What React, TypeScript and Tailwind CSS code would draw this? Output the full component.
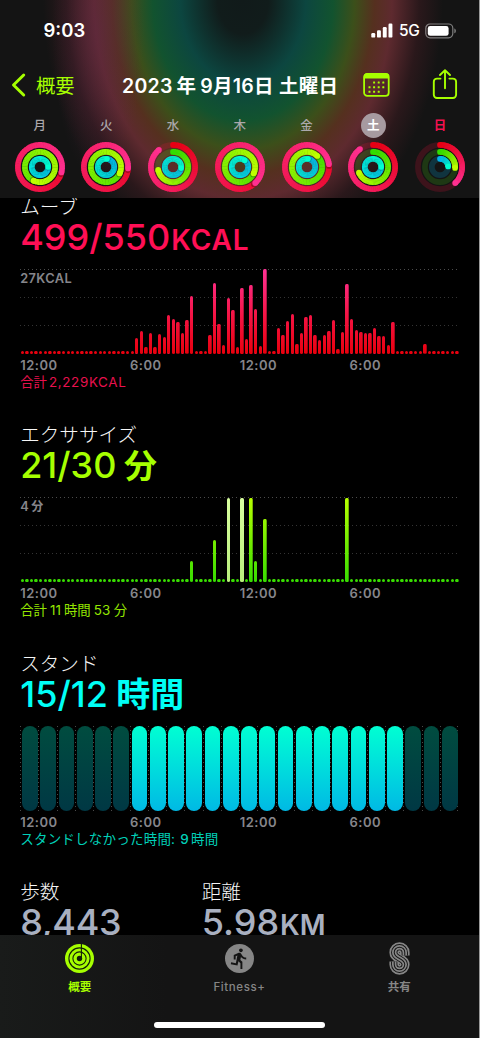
import React from 'react';
import { MdDirectionsRun } from 'react-icons/md';

type Day = { label: string; rings: number[]; state?: 'selected' | 'today' };

const days: Day[] = [
  { label: '月', rings: [1.29, 1.57, 1.25] },
  { label: '火', rings: [1.26, 1.32, 1.02] },
  { label: '水', rings: [0.89, 0.72, 1.27] },
  { label: '木', rings: [1.38, 1.32, 1.1] },
  { label: '金', rings: [1.23, 1.12, 1.02] },
  { label: '土', rings: [0.9, 0.69, 1.25], state: 'selected' },
  { label: '日', rings: [0.38, 0.26, 0.24], state: 'today' },
];

// one value per 15 minutes, in px
const moveBars: number[] = [
  ...Array(25).fill(3),
  15.7, 23, 6.7, 20.7, 7, 19.7, 17.3, 38.7, 35.3, 31.7, 20.7, 33.7, 58, 3, 3, 3,
  19.3, 71, 30.3, 9.3, 56, 43.7, 7.3, 66.3, 14.7, 69.3, 44.7, 8, 84.7, 3, 3,
  25.7, 19, 33.3, 39.7, 10.3, 21.3, 36.7, 39, 19.3, 14, 18.7, 23.3, 33.7, 4.7,
  22, 69.7, 34.7, 24.3, 21.7, 20.7, 20.7, 25.7, 18, 18, 9, 32.3,
  3, 3, 3, 3, 3, 3, 9.7, 3, 3, 3, 3, 3, 3, 3,
];

const exerciseValues: Record<number, number> = {
  37: 21.3, 42: 42.3, 45: 84.3, 48: 84.3, 50: 84.3, 51: 21.3, 53: 63.3, 71: 84.3,
};
const exerciseBars = Array.from({ length: 96 }, (_, i) => exerciseValues[i] ?? 3);

const ringColors = [
  { from: [230, 0, 20], to: [255, 48, 145], track: 'rgba(250,17,60,0.18)' },
  { from: [50, 220, 0], to: [190, 255, 0], track: 'rgba(80,220,20,0.18)' },
  { from: [0, 180, 235], to: [0, 255, 208], track: 'rgba(0,180,235,0.2)' },
];

const mix = (a: number[], b: number[], t: number) =>
  `rgb(${a.map((v, i) => Math.round(v + (b[i] - v) * t)).join(',')})`;

const Ring = ({ radius, value, index }: { radius: number; value: number; index: number }) => {
  const { from, to, track } = ringColors[index];
  const point = (t: number) => {
    const angle = t * Math.PI * 2;
    return [26 + radius * Math.sin(angle), 26 - radius * Math.cos(angle)];
  };
  const start = Math.max(0, value - 1);
  const steps = 60;
  const segments = Array.from({ length: steps }, (_, i) => {
    const t0 = start + ((value - start) * i) / steps;
    const t1 = Math.min(value, t0 + (value - start) / steps + 0.004);
    const [x0, y0] = point(t0);
    const [x1, y1] = point(t1);
    return (
      <path
        key={i}
        d={`M${x0} ${y0}A${radius} ${radius} 0 0 1 ${x1} ${y1}`}
        stroke={mix(from, to, t0 / value)}
      />
    );
  });
  const [sx, sy] = point(start);
  const [ex, ey] = point(value);
  const [shx, shy] = point(value + 0.012);

  return (
    <g fill="none" strokeWidth="5.7">
      <circle cx="26" cy="26" r={radius} stroke={track} />
      {value < 1 && <circle cx={sx} cy={sy} r="2.85" fill={mix(from, to, 0)} strokeWidth="0" />}
      {segments}
      {value > 1 && <circle cx={shx} cy={shy} r="2.85" fill="rgba(0,0,0,0.3)" strokeWidth="0" />}
      <circle cx={ex} cy={ey} r="2.85" fill={mix(from, to, 1)} strokeWidth="0" />
    </g>
  );
};

const ActivityRings = ({ values }: { values: number[] }) => (
  <svg className="h-[52px] w-[52px]" viewBox="0 0 52 52">
    {[22.1, 15.1, 8.2].map((radius, i) => (
      <Ring key={radius} radius={radius} value={values[i]} index={i} />
    ))}
  </svg>
);

const StatusBar = () => (
  <div className="flex h-[61px] items-center justify-between pl-[43.5px] pr-[22px]">
    <span className="text-[18.5px] font-semibold leading-none text-white">9:03</span>
    <div className="flex items-center">
      <svg className="h-[15px] w-[22px]" viewBox="0 0 22 15" fill="#fff">
        <rect x="0.3" y="10" width="3.9" height="4.6" rx="1.2" />
        <rect x="6" y="7.3" width="3.9" height="7.3" rx="1.2" />
        <rect x="11.8" y="4" width="3.9" height="10.6" rx="1.2" />
        <rect x="17.5" y="0.5" width="3.9" height="14.1" rx="1.2" />
      </svg>
      <span className="ml-[6px] w-[22px] text-[15.5px] font-medium leading-none tracking-[-0.3px] text-white">5G</span>
      <svg className="ml-[4px] h-[16px] w-[32px]" viewBox="0 0 32 16">
        <rect x="0.8" y="1" width="27" height="13.8" rx="4.2" fill="none" stroke="#fff" strokeOpacity="0.45" strokeWidth="1.2" />
        <rect x="2.8" y="3" width="20.8" height="9.8" rx="2.4" fill="#fff" />
        <path d="M29.3 5.6v4.6c1-.4 1.6-1.2 1.6-2.3s-.6-1.9-1.6-2.3z" fill="#fff" fillOpacity="0.45" />
      </svg>
    </div>
  </div>
);

const NavBar = () => (
  <div className="flex h-[48px] items-center pl-[11px]">
    <svg className="h-[26px] w-[15px]" viewBox="0 0 15 26" fill="none" stroke="#a6ff00" strokeWidth="3" strokeLinecap="round" strokeLinejoin="round">
      <path d="M12.7 3L2.5 13l10.2 10" />
    </svg>
    <span className="ml-[10px] w-[86px] pt-[3px] text-[19.3px] leading-none text-[#a6ff00]">概要</span>
    <h1 className="w-[241px] whitespace-nowrap pt-[3px] text-[19.5px] font-semibold leading-none tracking-[0.25px] text-white">
      2023<span className="ml-[4px]">年</span><span className="ml-[4px]">9</span>月16日 土曜日
    </h1>
    <svg className="h-[26px] w-[28px]" viewBox="0 0 28 26">
      <rect x="1.1" y="1.9" width="24.6" height="22" rx="3.2" fill="none" stroke="#a6ff00" strokeWidth="1.8" />
      <path d="M.9 6.5V4.5a3.2 3.2 0 0 1 3.2-3.2h18.7a3.2 3.2 0 0 1 3.2 3.2v2z" fill="#a6ff00" />
      <g fill="#a6ff00">
        {[10.8, 15.4, 20].map((y, row) =>
          [0, 1, 2, 3].map((col) => {
            const x = (row === 0 ? 10.3 : 5.7) + col * 4.6;
            if (row === 2 && col === 3) return null;
            return x < 22 && <rect key={`${row}-${col}`} x={x - 0.2} y={y - 1.2} width="2" height="2" rx="0.3" />;
          })
        )}
      </g>
    </svg>
    <svg className="ml-[41px] h-[32px] w-[26px]" viewBox="0 0 26 32" fill="none" stroke="#a6ff00" strokeWidth="1.9" strokeLinecap="round" strokeLinejoin="round">
      <path d="M8.5 9.6H5a3.2 3.2 0 0 0-3.2 3.2v13a3.2 3.2 0 0 0 3.2 3.2h15.9a3.2 3.2 0 0 0 3.2-3.2v-13a3.2 3.2 0 0 0-3.2-3.2h-3.5" />
      <path d="M13 19.2V1.500M8 6l5-4.800L18 6" />
    </svg>
  </div>
);

const WeekStrip = () => (
  <div className="grid grid-cols-7 pl-[6.3px] pr-[5.7px]">
    {days.map((day) => (
      <div key={day.label} className="flex flex-col items-center">
        <span
          className={
            day.state === 'selected'
              ? 'mt-[4px] flex h-[25px] w-[25px] items-center justify-center rounded-full bg-[#a79aa0] pt-[1px] text-[12.5px] font-bold text-white'
              : day.state === 'today'
                ? 'mt-[4px] flex h-[25px] w-[25px] items-center justify-center pt-[1px] text-[12.5px] font-bold text-[#f5114f]'
                : 'mt-[4px] flex h-[25px] w-[25px] items-center justify-center pt-[1px] text-[12.5px] font-medium text-[#aba8ab]'
          }
        >
          {day.label}
        </span>
        <div className="mt-[3.4px]">
          <ActivityRings values={day.rings} />
        </div>
      </div>
    ))}
  </div>
);

const HourLabels = () => (
  <div className="mt-[3px] grid h-[17px] w-[439px] grid-cols-4 text-[13px] font-semibold leading-[17px] tracking-[0.5px] text-[#86868b]">
    <span>12:00</span>
    <span>6:00</span>
    <span>12:00</span>
    <span>6:00</span>
  </div>
);

const Title = ({ children }: { children: React.ReactNode }) => (
  <h2 className="h-[24px] whitespace-nowrap text-[19.6px] font-light leading-[24px] text-[#f6f6f6]">{children}</h2>
);

const BarChart = ({ bars, label, kind }: { bars: number[]; label: React.ReactNode; kind: 'move' | 'exercise' }) => (
  <div className="relative mt-[14px] h-[85.3px] w-[439px]">
    <div className="absolute inset-0 flex flex-col">
      <div className="h-[28px] bg-[repeating-linear-gradient(to_right,#4c4c4c_0_1.5px,transparent_1.5px_4px)] bg-[length:100%_1.3px] bg-no-repeat" />
      <div className="h-[28px] bg-[repeating-linear-gradient(to_right,#343434_0_1.5px,transparent_1.5px_4px)] bg-[length:100%_1.3px] bg-no-repeat" />
      <div className="h-[28px] bg-[repeating-linear-gradient(to_right,#343434_0_1.5px,transparent_1.5px_4px)] bg-[length:100%_1.3px] bg-no-repeat" />
    </div>
    <span className="absolute left-0 top-[2px] text-[12.8px] font-semibold leading-[16px] tracking-[0.4px] text-[#86868b]">{label}</span>
    <div className="relative grid h-full grid-cols-[repeat(96,minmax(0,1fr))] items-end justify-items-center">
      {bars.map((height, i) => (
        <div
          key={i}
          className={
            kind === 'move'
              ? 'w-[3.4px] rounded-[1.5px] bg-[linear-gradient(to_top,#e8000d,#f41444_45%,#ff3296)] bg-[length:100%_85px] bg-bottom'
              : i === 45 || i === 48
                ? 'w-[3.4px] rounded-[1.5px] bg-[linear-gradient(to_top,#b9ee7c,#d9ffa0)]'
                : 'w-[3.4px] rounded-[1.5px] bg-[linear-gradient(to_top,#36dc00,#b8ff00)] bg-[length:100%_85px] bg-bottom'
          }
          style={{ height }}
        />
      ))}
    </div>
  </div>
);

const StandChart = () => (
  <div className="mt-[14px] grid h-[85.3px] w-[439px] grid-cols-24 pr-[1px]">
    {Array.from({ length: 24 }, (_, i) => (
      <div
        key={i}
        className="flex justify-center bg-[repeating-linear-gradient(to_bottom,#4a4a4a_0_1.5px,transparent_1.5px_4px)] bg-[length:1.3px_100%] bg-no-repeat pl-[1.5px] last:bg-[repeating-linear-gradient(to_bottom,#4a4a4a_0_1.5px,transparent_1.5px_4px),repeating-linear-gradient(to_bottom,#4a4a4a_0_1.5px,transparent_1.5px_4px)] last:bg-[position:0_0,100%_0]"
      >
        <div
          className={
            i >= 6 && i < 21
              ? 'h-full w-[15.7px] rounded-full bg-linear-to-b from-[#00ffd2] to-[#00b9e4]'
              : 'h-full w-[15.7px] rounded-full bg-linear-to-b from-[#004c3f] to-[#003844]'
          }
        />
      </div>
    ))}
  </div>
);

const Overview = () => (
  <main className="h-[737px] overflow-hidden pl-[20.2px]">
    <section className="-mt-[3.5px] h-[228.5px]">
      <Title>ムーブ</Title>
      <p className="h-[36px] text-[36px] font-medium leading-[36px] text-[#ff0f55]">
        499/550<span className="ml-[1px] text-[28px] font-semibold tracking-[0.9px]">KCAL</span>
      </p>
      <BarChart bars={moveBars} label="27KCAL" kind="move" />
      <HourLabels />
      <p className="h-[17px] text-[13.4px] leading-[17px] text-[#e8114e]">
        合計<span className="ml-[2px] tracking-[0.65px]">2,229KCAL</span>
      </p>
    </section>

    <section className="h-[228.7px]">
      <Title>エクササイズ</Title>
      <p className="h-[36px] text-[36px] font-medium leading-[36px] text-[#a6ff00]">
        21/30<span className="ml-[7.5px] text-[33px] font-bold">分</span>
      </p>
      <BarChart bars={exerciseBars} label={<>4<span className="ml-[2px] text-[12px] tracking-normal">分</span></>} kind="exercise" />
      <HourLabels />
      <p className="h-[17px] text-[13.4px] leading-[17px] text-[#95e600]">
        合計<span className="mx-[3px]">11</span>時間<span className="mx-[3px] tracking-[0.3px]">53</span>分
      </p>
    </section>

    <section className="h-[228.5px]">
      <Title>スタンド</Title>
      <p className="h-[36px] text-[36px] font-medium leading-[36px] text-[#00fff6]">
        15/12<span className="ml-[8.5px] text-[34px] font-bold">時間</span>
      </p>
      <StandChart />
      <HourLabels />
      <p className="h-[17px] text-[13.5px] leading-[17px] tracking-[0.22px] text-[#00d0b8]">
        スタンドしなかった時間: <span className="ml-[1px] font-medium">9</span><span className="ml-[2px]">時間</span>
      </p>
    </section>

    <section className="flex">
      <div className="w-[181.6px]">
        <Title>歩数</Title>
        <p className="h-[36px] text-[36px] font-medium leading-[36px] tracking-[-0.3px] text-[#a9b0c0]">8,443</p>
      </div>
      <div>
        <Title>距離</Title>
        <p className="h-[36px] text-[36px] font-medium leading-[36px] text-[#a9b0c0]">
          5.98<span className="ml-[1px] text-[28px] font-semibold">KM</span>
        </p>
      </div>
    </section>
  </main>
);

const SharingIcon = () => {
  const d = 'M15.4 13.2V10.3a5.2 5.2 0 0 0-10.4 0c0 6.6 10.4 5.3 10.4 11.9a5.2 5.2 0 0 1-10.4 0v-2.9';
  return (
    <svg className="h-[33px] w-[21px]" viewBox="0 0 20.4 32.5" fill="none">
      <path d={d} stroke="#868686" strokeWidth="9.5" />
      <path d={d} stroke="#141414" strokeWidth="6.2" />
      <path d={d} stroke="#868686" strokeWidth="4.4" />
      <path d={d} stroke="#141414" strokeWidth="1" />
    </svg>
  );
};

const TabBar = () => (
  <footer className="flex h-[103px] flex-col items-center bg-[linear-gradient(to_right,#191b1a,#141414_35%)]">
    <div className="grid w-full grid-cols-3 text-[11.5px] font-medium leading-[16px] text-[#868686]">
      <div className="flex flex-col items-center font-bold text-[#a6ff00]">
        <div className="flex h-[44px] items-center pt-[3px]">
          <svg className="h-[29px] w-[29px]" viewBox="0 0 29 29" fill="none">
            <circle cx="14.5" cy="14.5" r="14.5" fill="#a6ff00" />
            <g stroke="#15200a" strokeWidth="1.1">
              <circle cx="14.5" cy="14.5" r="10.6" />
              <circle cx="14.5" cy="14.5" r="6.6" />
              <path d="M16.4 0v13" />
            </g>
            <circle cx="14.5" cy="14.5" r="2.7" fill="#15200a" />
          </svg>
        </div>
        概要
      </div>
      <div className="flex flex-col items-center">
        <div className="flex h-[44px] items-center pt-[3px]">
          <div className="flex h-[29px] w-[29px] items-center justify-center rounded-full bg-[#868686]">
            <MdDirectionsRun className="h-[23px] w-[23px] text-[#141414]" />
          </div>
        </div>
        <span className="tracking-[0.6px]">Fitness+</span>
      </div>
      <div className="flex flex-col items-center font-semibold">
        <div className="flex h-[44px] items-center pt-[3px]">
          <SharingIcon />
        </div>
        共有
      </div>
    </div>
    <div className="mt-[26.5px] h-[6.5px] w-[171px] rounded-full bg-white" />
  </footer>
);

const App = () => (
  <div className="h-[1038px] w-[480px] overflow-hidden border-r border-[#9a9a9a] bg-black font-['Inter','Noto_Sans_CJK_JP',sans-serif]">
    <header className="h-[198px] overflow-hidden bg-[#141414] bg-[radial-gradient(ellipse_46px_150px_at_98px_30px,rgba(96,40,72,0.45),rgba(96,40,72,0)),radial-gradient(ellipse_196px_262px_at_243px_0px,#111a1a_0%,#111c1b_13%,#0c4640_32%,#12532f_46%,#3c4f1a_57%,#55301f_67%,#5e2a2f_76%,#2a181b_90%,#141414_102%)]">
      <StatusBar />
      <NavBar />
      <WeekStrip />
    </header>
    <Overview />
    <TabBar />
  </div>
);

export default App;
